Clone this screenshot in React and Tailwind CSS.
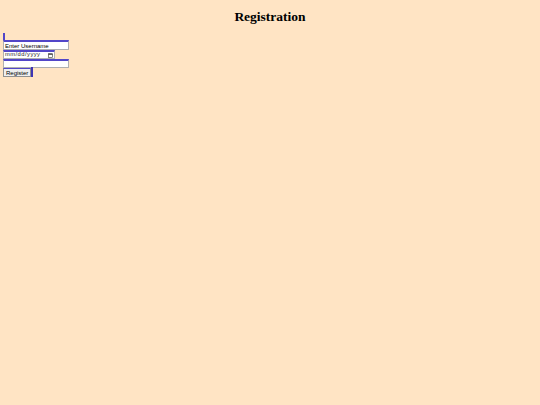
export default function App() {
  return (
    <div className="min-h-[405px] w-[540px] bg-[#ffe4c4] font-['Liberation_Sans',Arial,sans-serif]">
      <h1 className="pt-[9px] text-center font-['Liberation_Serif','Times_New_Roman',serif] text-[13.5px] font-bold leading-[16px] text-black">
        Registration
      </h1>
      <div className="mt-[8px] flex flex-col items-start pl-[3px]">
        <div className="h-[7px] w-[2px] bg-[#5246c8]" />
        <div className="flex h-[10px] w-[66px] items-center border border-t-2 border-[#b0b0b0] border-t-[#5246c8] bg-white pl-[1px] text-[6px] leading-none text-black">
          Enter Username
        </div>
        <div className="flex h-[9px] w-[52px] items-center justify-between border border-t-2 border-[#b0b0b0] border-t-[#5246c8] bg-white px-[1px] text-[5.8px] leading-none tracking-[0.45px] text-[#222]">
          <span>mm/dd/yyyy</span>
          <svg width="5" height="5" viewBox="0 0 10 10">
            <rect x="1" y="1.5" width="8" height="7.5" fill="none" stroke="#333" strokeWidth="1.2" />
            <rect x="1" y="1.5" width="8" height="2" fill="#333" />
          </svg>
        </div>
        <div className="h-[9px] w-[66px] border border-t-2 border-[#b0b0b0] border-t-[#5246c8] bg-white" />
        <div className="flex">
          <button className="flex h-[9px] items-center border border-[#909090] border-t-[#5246c8] bg-[#efefef] px-[2px] text-[6px] leading-none text-black">
            Register
          </button>
          <div className="-mt-[1px] h-[10px] w-[2px] bg-[#3e34b4]" />
        </div>
      </div>
    </div>
  );
}
